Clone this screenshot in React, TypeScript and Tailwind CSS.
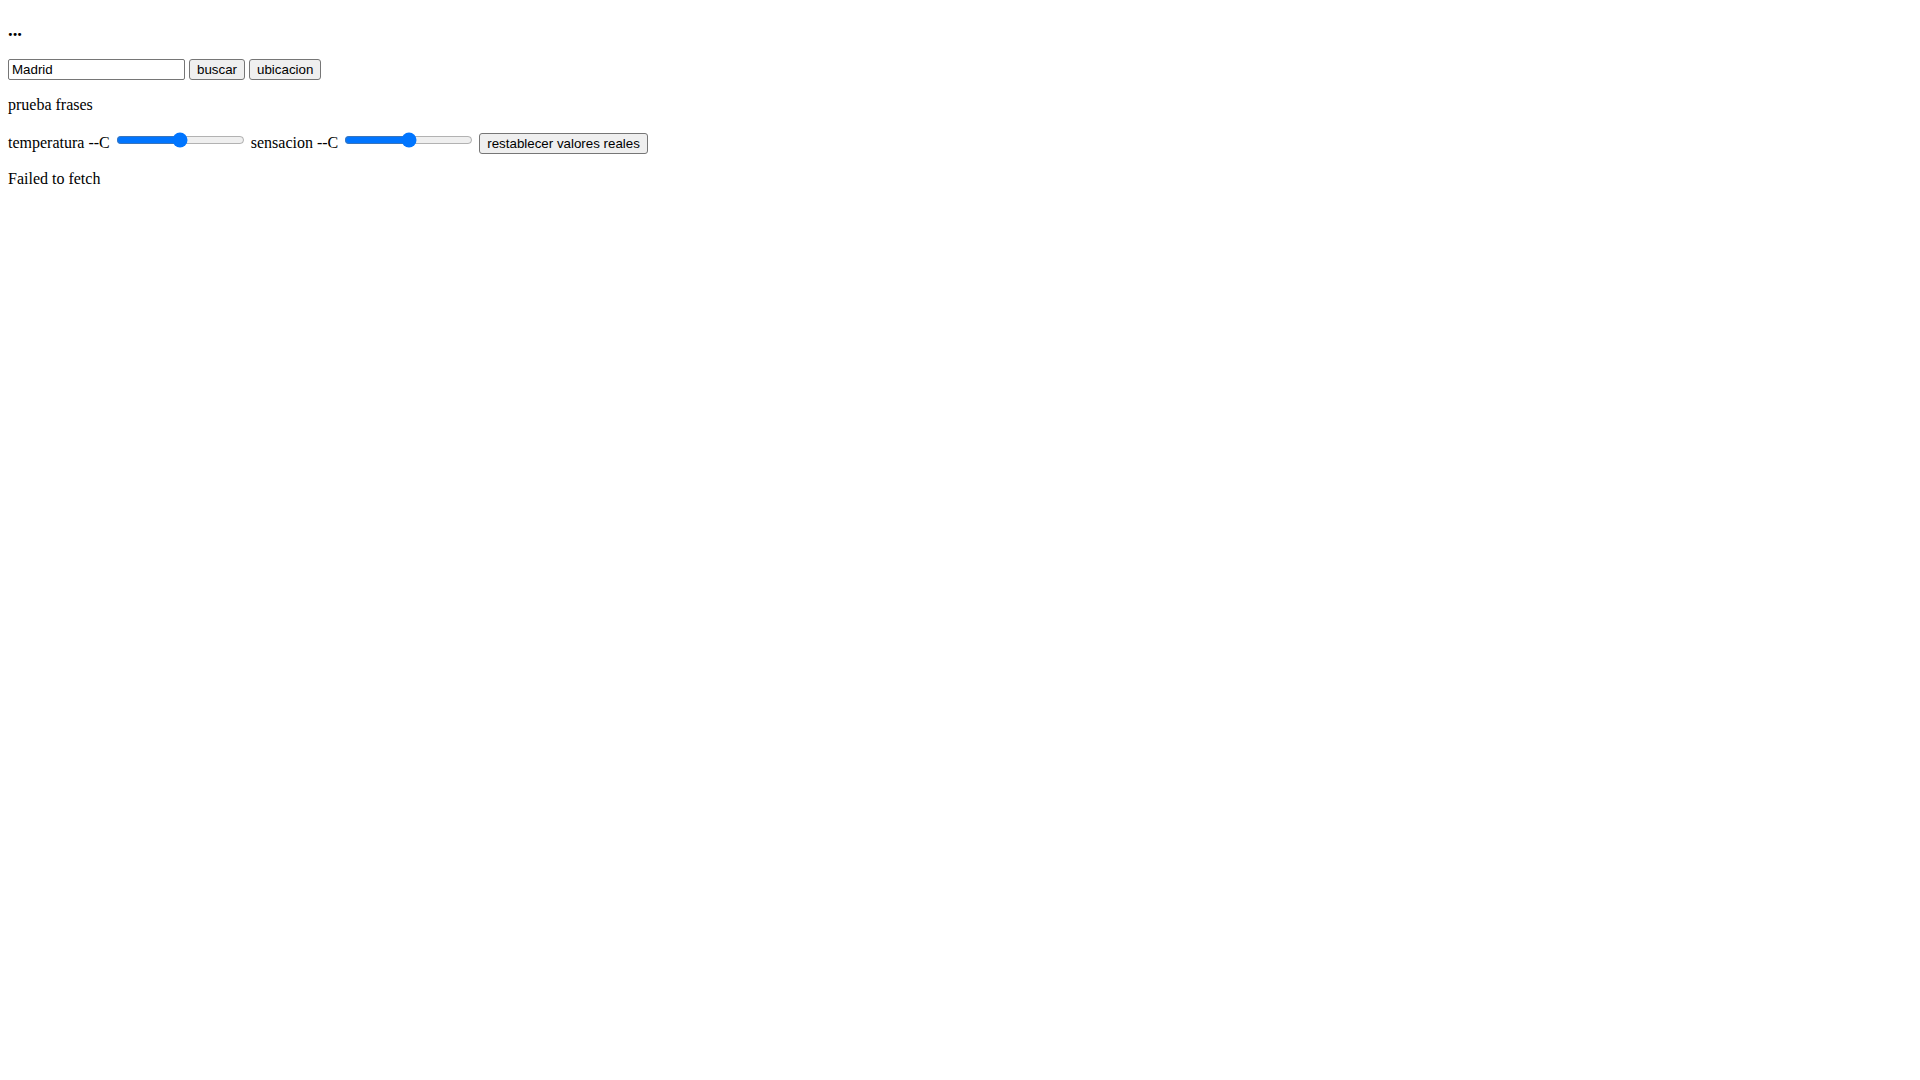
import React, { useState } from 'react';

const btn =
  "inline-block h-[21px] rounded-[3px] border border-[#767676] bg-[#efefef] px-[7px] align-baseline font-['Liberation_Sans',Arial,sans-serif] text-[13.33px] leading-[normal]";

export default function App() {
  const [city, setCity] = useState('Madrid');
  const [temp, setTemp] = useState(50);
  const [feels, setFeels] = useState(50);

  return (
    <div className="min-h-screen bg-white px-2 pt-[18.72px] font-['Liberation_Serif',serif] text-[16px] leading-[normal] text-black">
      <h3 className="mb-[18.72px] text-[18.72px] font-bold">...</h3>

      <div className="flex items-center gap-[4px] h-[21px]">
        <input
          type="text"
          value={city}
          onChange={e => setCity(e.target.value)}
          className="h-[21px] w-[177px] rounded-[2px] border border-[#767676] px-[3px] font-['Liberation_Sans',Arial,sans-serif] text-[13.33px] leading-[normal] outline-none"
        />
        <button className={btn}>buscar</button>
        <button className={btn}>ubicacion</button>
      </div>

      <p className="my-4">prueba frases</p>

      <p className="my-4">
        temperatura --C{' '}
        <input
          type="range"
          min={0}
          max={100}
          value={temp}
          onChange={e => setTemp(Number(e.target.value))}
          className="m-[2px] inline-block w-[129px] align-baseline accent-[#0075ff]"
        />{' '}
        sensacion --C{' '}
        <input
          type="range"
          min={0}
          max={100}
          value={feels}
          onChange={e => setFeels(Number(e.target.value))}
          className="m-[2px] inline-block w-[129px] align-baseline accent-[#0075ff]"
        />{' '}
        <button onClick={() => { setTemp(50); setFeels(50); }} className={btn}>
          restablecer valores reales
        </button>
      </p>

      <p className="my-4">Failed to fetch</p>
    </div>
  );
}
